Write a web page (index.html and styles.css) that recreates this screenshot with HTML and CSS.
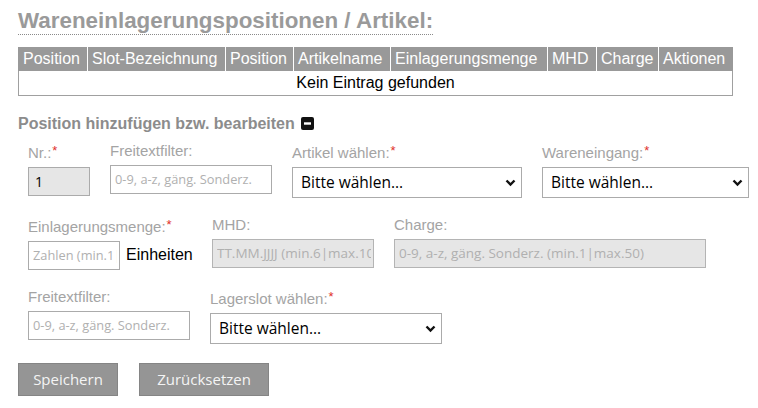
FILE: index.html
```html
<!DOCTYPE html>
<html lang="de">
<head>
<meta charset="utf-8">
<title>Wareneinlagerungspositionen</title>
<link rel="stylesheet" href="styles.css">
</head>
<body>
<div class="page">
  <h1 class="title">Wareneinlagerungspositionen / Artikel:</h1>
  <table class="grid">
    <colgroup>
      <col class="c1"><col class="c2"><col class="c3"><col class="c4"><col class="c5"><col class="c6"><col class="c7"><col class="c8">
    </colgroup>
    <thead>
      <tr><th>Position</th><th>Slot-Bezeichnung</th><th>Position</th><th>Artikelname</th><th>Einlagerungsmenge</th><th>MHD</th><th>Charge</th><th>Aktionen</th></tr>
    </thead>
    <tbody>
      <tr><td colspan="8">Kein Eintrag gefunden</td></tr>
    </tbody>
  </table>

  <h2 class="section">Position hinzufügen bzw. bearbeiten <svg class="minus" width="13" height="13" viewBox="0 0 13 13"><rect x="0" y="0" width="13" height="13" rx="2" fill="#111"/><rect x="3" y="5.3" width="7" height="2.4" fill="#fff"/></svg></h2>

  <div class="form">
    <div class="row r1">
      <div class="field w-nr">
        <label>Nr.:<span class="req">*</span></label>
        <input class="inp filled" type="text" value="1">
      </div>
      <div class="field w-filter">
        <label>Freitextfilter:</label>
        <input class="inp" type="text" placeholder="0-9, a-z, gäng. Sonderz.">
      </div>
      <div class="field w-artikel">
        <label>Artikel wählen:<span class="req">*</span></label>
        <div class="sel"><select><option>Bitte wählen...</option></select><svg class="chev" width="11" height="8" viewBox="0 0 11 8"><path d="M1.5 1.5 L5.5 5.5 L9.5 1.5" fill="none" stroke="#111" stroke-width="2.4"/></svg></div>
      </div>
      <div class="field w-we">
        <label>Wareneingang:<span class="req">*</span></label>
        <div class="sel"><select><option>Bitte wählen...</option></select><svg class="chev" width="11" height="8" viewBox="0 0 11 8"><path d="M1.5 1.5 L5.5 5.5 L9.5 1.5" fill="none" stroke="#111" stroke-width="2.4"/></svg></div>
      </div>
    </div>

    <div class="row r2">
      <div class="field w-menge">
        <label>Einlagerungsmenge:<span class="req">*</span></label>
        <div class="inline">
          <input class="inp w-num" type="text" placeholder="Zahlen (min.1|max.10)">
          <span class="unit">Einheiten</span>
        </div>
      </div>
      <div class="field w-mhd">
        <label>MHD:</label>
        <input class="inp disabled" type="text" placeholder="TT.MM.JJJJ (min.6|max.10)" disabled>
      </div>
      <div class="field w-charge">
        <label>Charge:</label>
        <input class="inp disabled" type="text" placeholder="0-9, a-z, gäng. Sonderz. (min.1|max.50)" disabled>
      </div>
    </div>

    <div class="row r3">
      <div class="field w-filter">
        <label>Freitextfilter:</label>
        <input class="inp" type="text" placeholder="0-9, a-z, gäng. Sonderz.">
      </div>
      <div class="field w-slot">
        <label>Lagerslot wählen:<span class="req">*</span></label>
        <div class="sel"><select><option>Bitte wählen...</option></select><svg class="chev" width="11" height="8" viewBox="0 0 11 8"><path d="M1.5 1.5 L5.5 5.5 L9.5 1.5" fill="none" stroke="#111" stroke-width="2.4"/></svg></div>
      </div>
    </div>
  </div>

  <div class="buttons">
    <button class="btn w-save" type="button">Speichern</button>
    <button class="btn w-reset" type="button">Zurücksetzen</button>
  </div>
</div>
</body>
</html>
```

FILE: styles.css
```css
* { box-sizing: border-box; }
html, body { margin: 0; padding: 0; background: #fff; }
body { font-family: "Liberation Sans", Arial, sans-serif; color: #000; }

.page { padding: 8px 0 0 18px; }

.title {
  margin: 0;
  display: inline-block;
  font-size: 22.4px;
  line-height: 25px;
  font-weight: bold;
  color: #9a9a9a;
  border-bottom: 1px dotted #8a8a8a;
  padding-bottom: 1px;
}

.grid {
  display: table;
  margin-top: 12px;
  width: 714px;
  table-layout: fixed;
  border-collapse: collapse;
  font-size: 16px;
}
.c1 { width: 69px; } .c2 { width: 138px; } .c3 { width: 68px; } .c4 { width: 97px; }
.c5 { width: 157px; } .c6 { width: 49px; } .c7 { width: 62px; } .c8 { width: 74px; }
.grid th {
  background: #999;
  color: #fff;
  font-weight: normal;
  text-align: left;
  height: 24px;
  padding: 0 0 0 4px;
  white-space: nowrap;
  overflow: hidden;
  border-left: 1px solid #fff;
  line-height: 22px;
}
.grid th:first-child { border-left: 1px solid #999; }
.grid td {
  height: 24px;
  text-align: center;
  border: 1px solid #a0a0a0;
  border-top: none;
  padding: 0;
  line-height: 22px;
}

.section {
  margin: 19px 0 0 0;
  font-size: 16px;
  line-height: 18px;
  font-weight: bold;
  color: #8c8c8c;
  display: flex;
  align-items: center;
  gap: 6px;
}
.minus { display: block; }

.form { padding-left: 10px; margin-top: 9px; }
.row { display: flex; gap: 20px; }
.r1 { margin-bottom: 18px; }
.r2 { margin-bottom: 18px; }
.r3 { margin-bottom: 19px; }
.field { display: flex; flex-direction: column; gap: 5px; }
.field label {
  font-size: 15px;
  line-height: 18px;
  color: #a4a4a4;
  white-space: nowrap;
}
.req { color: #e0302a; font-size: 13px; vertical-align: 3px; margin-left: 1px; }

.inp {
  height: 29px;
  border: 1px solid #ababab;
  background: #fff;
  padding: 0 2px 0 4px;
  font-family: "Open Sans", sans-serif;
  font-size: 12.8px;
  color: #000;
  outline: none;
  width: 100%;
}
.inp::placeholder { color: #b0b0b0; }
.inp.filled { background: #e6e6e6; font-size: 14px; padding-left: 6px; }
.inp.disabled { background: #e6e6e6; border-color: #b4b4b4; font-size: 13.5px; }

.sel { position: relative; height: 31px; }
.sel select {
  -webkit-appearance: none;
  appearance: none;
  width: 100%;
  height: 31px;
  border: 1px solid #ababab;
  background: #fff;
  font-family: "Open Sans", sans-serif;
  font-size: 15.5px;
  color: #000;
  padding: 0 24px 0 8px;
  border-radius: 0;
  outline: none;
}
.chev { position: absolute; right: 6px; top: 12px; pointer-events: none; }

.w-nr { width: 62px; }
.w-filter { width: 162px; }
.w-artikel { width: 230px; }
.w-we { width: 207px; }
.w-menge { width: 164px; }
.w-mhd { width: 162px; }
.w-charge { width: 312px; }
.w-slot { width: 232px; }

.inline { display: flex; align-items: center; gap: 6px; }
.w-num { width: 92px; flex: none; }
.unit { font-size: 16px; color: #000; white-space: nowrap; }

.buttons { display: flex; gap: 21px; }
.btn {
  height: 33px;
  background: #959595;
  border: 1px solid #858585;
  color: #f4f4f4;
  font-family: "Open Sans", sans-serif;
  font-size: 15px;
  padding: 0;
}
.w-save { width: 100px; }
.w-reset { width: 130px; }
```
